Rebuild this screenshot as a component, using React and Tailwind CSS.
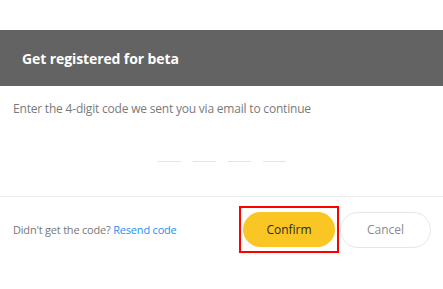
import React from 'react';

export default function App() {
  return (
    <div className="w-[443px] h-[289px] bg-white overflow-hidden" style={{ fontFamily: '"Open Sans", "Noto Sans", sans-serif' }}>
      {/* Header */}
      <div className="mt-[30px] h-[56px] bg-[#636363] flex items-center pl-[22px]">
        <h1 className="text-white text-[14px] font-bold tracking-[-0.1px]">Get registered for beta</h1>
      </div>

      {/* Body */}
      <div className="h-[111px] border-b border-[#ececec]">
        <p className="pt-[15px] pl-[13px] text-[12px] leading-[16px] text-[#7a7a7a] tracking-[-0.2px]">
          Enter the 4-digit code we sent you via email to continue
        </p>
        <div className="mt-[44px] flex justify-center gap-[12px] pl-[1px]">
          <span className="w-[23px] h-px bg-[#e3e3e3]" />
          <span className="w-[23px] h-px bg-[#e3e3e3]" />
          <span className="w-[23px] h-px bg-[#e3e3e3]" />
          <span className="w-[23px] h-px bg-[#e3e3e3]" />
        </div>
      </div>

      {/* Footer */}
      <div className="flex items-center justify-between pl-[13px] pr-[12px] pt-[9px]">
        <p className="text-[11px] text-[#777] tracking-[-0.2px] mt-[2px]">
          Didn't get the code? <span className="text-[#1f8ef1]">Resend code</span>
        </p>
        <div className="flex items-center">
          <div className="border-2 border-[#ff0000] px-[2px] py-[4px]">
            <button className="w-[92px] h-[35px] rounded-full bg-[#f9c623] text-[12px] font-medium text-[#2a2a2a]">
              Confirm
            </button>
          </div>
          <button className="ml-[1px] w-[91px] h-[36px] rounded-full border border-[#e6e6e6] bg-white text-[12px] text-[#8a8a8a]">
            Cancel
          </button>
        </div>
      </div>
    </div>
  );
}
